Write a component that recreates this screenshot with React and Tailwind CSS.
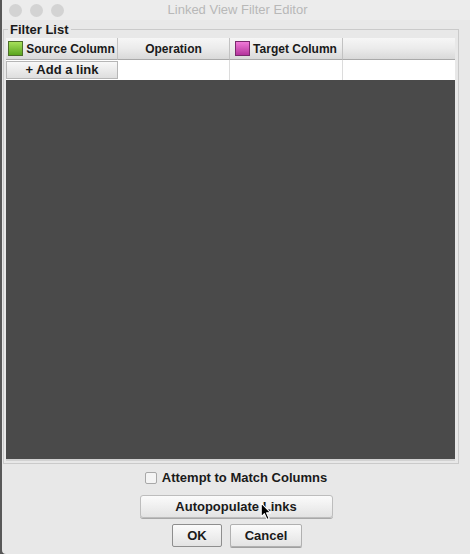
import React from 'react';

const font = { fontFamily: '"Liberation Sans", Arial, sans-serif' };

function HeaderCell({ children, swatch, last }) {
  return (
    <div
      className={`flex h-[22px] items-center justify-center gap-[3px] border-b border-[#a9a9a9] bg-gradient-to-b from-[#f6f6f6] via-[#ebebeb] to-[#d9d9d9] text-[12px] font-bold text-[#1a1a1a] ${last ? '' : 'border-r border-r-[#c2c2c2]'}`}
    >
      {swatch === 'green' && (
        <span className="h-[15px] w-[15px] shrink-0 border border-[#4d6e2a] bg-gradient-to-b from-[#a6e05a] to-[#5aa51c]" />
      )}
      {swatch === 'pink' && (
        <span className="h-[15px] w-[15px] shrink-0 border border-[#7a2a6d] bg-gradient-to-b from-[#f07ad8] to-[#b4329c]" />
      )}
      <span>{children}</span>
    </div>
  );
}

export default function App() {
  return (
    <div className="relative flex h-[554px] w-[470px] overflow-hidden bg-[#4f4f4f]" style={font}>
      {/* strip of desktop behind the window */}
      <div className="w-[2px] shrink-0 bg-[#585858]" />

      <div className="flex flex-1 flex-col rounded-bl-[4px] bg-[#e8e8e8]">
        {/* title bar */}
        <div className="relative flex h-[20px] items-center bg-[#ececec]">
          <div className="flex gap-[8px] pl-[7px]">
            <span className="h-[13px] w-[13px] rounded-full bg-[#d3d3d3]" />
            <span className="h-[13px] w-[13px] rounded-full bg-[#d3d3d3]" />
            <span className="h-[13px] w-[13px] rounded-full bg-[#d3d3d3]" />
          </div>
          <div className="absolute inset-0 flex items-center justify-center pl-[3px] text-[13px] text-[#b8b8b8]">
            Linked View Filter Editor
          </div>
        </div>

        {/* Filter List group */}
        <div className="relative ml-[1px] mt-[9px] h-[435px] w-[456px] border border-[#cacaca] pl-[2px] pt-[8px]">
          <span className="absolute left-[4px] top-[-8px] bg-[#e8e8e8] px-[2px] text-[13px] font-bold leading-[15px] text-[#1a1a1a]">
            Filter List
          </span>

          <div className="flex w-[449px] flex-col">
            <div className="grid grid-cols-[112px_112px_113px_112px]">
              <HeaderCell swatch="green">Source Column</HeaderCell>
              <HeaderCell>Operation</HeaderCell>
              <HeaderCell swatch="pink">Target Column</HeaderCell>
              <HeaderCell last />
            </div>
            <div className="grid h-[20px] grid-cols-[112px_112px_113px_112px] bg-white">
              <button className="mt-[1px] flex h-[18px] items-center justify-center border border-[#b6b6b6] bg-gradient-to-b from-[#f8f8f8] to-[#dedede] text-[13px] font-bold text-[#1a1a1a]">
                + Add a link
              </button>
              <div className="border-r border-[#dcdcdc]" />
              <div className="border-r border-[#dcdcdc]" />
              <div />
            </div>
            <div className="h-[381px] border-b-2 border-[#d2d2d2] bg-[#4a4a4a]" />
          </div>
        </div>

        {/* bottom controls */}
        <div className="flex flex-col items-center">
          <div className="mt-[7px] flex h-[14px] items-center gap-[5px]">
            <span className="h-[12px] w-[12px] rounded-[2px] border border-[#a8a8a8] bg-[#f4f4f4]" />
            <span className="text-[13px] font-bold text-[#1a1a1a]">Attempt to Match Columns</span>
          </div>
          <button className="mt-[10px] flex h-[23px] w-[193px] items-center justify-center rounded-[3px] border border-[#bdbdbd] bg-gradient-to-b from-[#fbfbfb] to-[#e3e3e3] text-[13px] font-bold text-[#1a1a1a] shadow-[0_1px_0_#a8a8a8]">
            Autopopulate Links
          </button>
          <div className="mt-[6px] flex gap-[8px] pl-[2px]">
            <button className="flex h-[23px] w-[50px] items-center justify-center rounded-[2px] border border-[#8e8e8e] bg-gradient-to-b from-[#fbfbfb] to-[#e3e3e3] text-[13px] font-bold text-[#1a1a1a]">
              OK
            </button>
            <button className="flex h-[23px] w-[72px] items-center justify-center rounded-[2px] border border-[#b0b0b0] bg-gradient-to-b from-[#fbfbfb] to-[#e3e3e3] text-[13px] font-bold text-[#1a1a1a] shadow-[0_1px_0_#a0a0a0]">
              Cancel
            </button>
          </div>
        </div>
      </div>

      {/* mouse pointer */}
      <svg className="absolute left-[260px] top-[502px]" width="13" height="19" viewBox="0 0 12 18">
        <path d="M1 1 L1 14 L4 11 L6.5 16.5 L8.5 15.6 L6 10.3 L10 10.3 Z" fill="#000" stroke="#fff" strokeWidth="1" strokeLinejoin="round" />
      </svg>
    </div>
  );
}
